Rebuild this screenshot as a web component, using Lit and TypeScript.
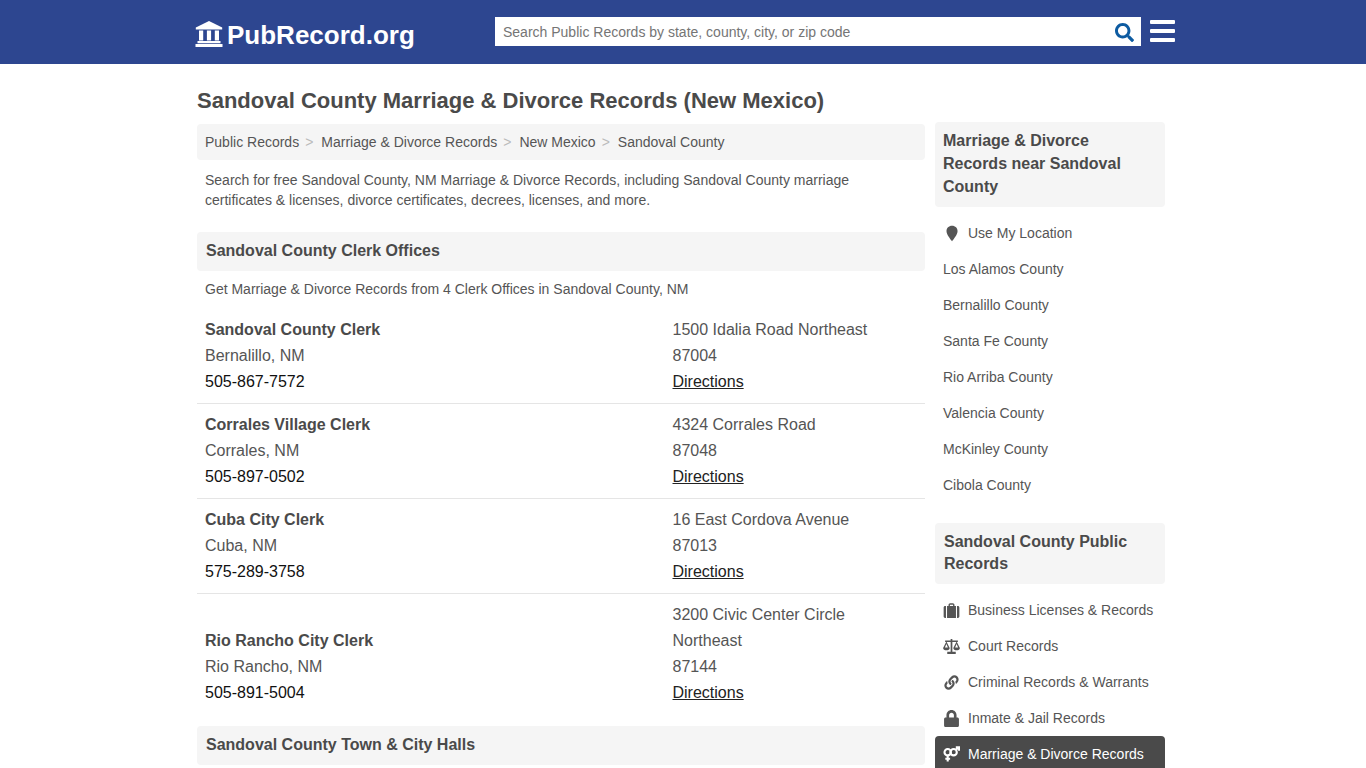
import { LitElement, html, css, svg } from "lit";
import { customElement } from "lit/decorators.js";

const offices = [
  { name: "Sandoval County Clerk", city: "Bernalillo, NM", phone: "505-867-7572", addr: ["1500 Idalia Road Northeast", "87004"] },
  { name: "Corrales Village Clerk", city: "Corrales, NM", phone: "505-897-0502", addr: ["4324 Corrales Road", "87048"] },
  { name: "Cuba City Clerk", city: "Cuba, NM", phone: "575-289-3758", addr: ["16 East Cordova Avenue", "87013"] },
  { name: "Rio Rancho City Clerk", city: "Rio Rancho, NM", phone: "505-891-5004", addr: ["3200 Civic Center Circle", "Northeast", "87144"] },
];
const near = ["Los Alamos County", "Bernalillo County", "Santa Fe County", "Rio Arriba County", "Valencia County", "McKinley County", "Cibola County"];

const icons: Record<string, [string, unknown]> = {
  pin: ["0 0 16 16", svg`<path d="M8.500 .8C5.400 .8 3.300 3 3.300 5.800 3.300 8.800 6.700 12.800 8.500 15.400c1.800-2.600 5.200-6.600 5.200-9.600C13.700 3 11.600 .8 8.500 .8z"/>`],
  brief: ["0 0 16 16", svg`<path fill-rule="evenodd" d="M.6 5.200C.6 4.400 1.200 3.800 2 3.800h.8V15H2c-.8 0-1.400-.6-1.400-1.400zM3.800 3.800h1.400V2.600C5.200 1.800 5.900 1.100 6.700 1.100h2.600c.8 0 1.500.7 1.500 1.500v1.200h1.400V15H3.800zM6.500 3.800h3V2.500h-3zM13.200 3.800h.8c.8 0 1.400.6 1.400 1.400v8.400c0 .8-.6 1.400-1.400 1.400h-.8z"/>`],
  scale: ["0 0 16 16", svg`<path d="M7.200 1H8.800V2.300H14V3.700H8.800V13H12V15H4V13H7.200V3.700H2V2.300H7.200z"/><path fill-rule="evenodd" d="M3.200 3.200 .1 9.400c0 1.500 1.400 2.200 3.100 2.200s3.100-.7 3.100-2.200zM3.200 5.600 1.800 9h2.800zM12.800 3.200 9.700 9.400c0 1.500 1.400 2.200 3.100 2.200s3.100-.7 3.100-2.200zM12.800 5.600 11.400 9h2.800z"/>`],
  link: ["-48 -48 608 608", svg`<path d="M326.612 185.391c59.747 59.809 58.927 155.698.36 214.59-.11.12-.24.25-.36.37l-67.2 67.2c-59.27 59.27-155.699 59.262-214.96 0-59.27-59.26-59.27-155.7 0-214.96l37.106-37.106c9.84-9.84 26.786-3.3 27.294 10.606.648 17.722 3.826 35.527 9.69 52.721 1.986 5.822.567 12.262-3.783 16.612l-13.087 13.087c-28.026 28.026-28.905 73.66-1.155 101.96 28.024 28.579 74.086 28.749 102.325.51l67.2-67.19c28.191-28.191 28.073-73.757 0-101.83-3.701-3.694-7.429-6.564-10.341-8.569a16.037 16.037 0 0 1-6.947-12.606c-.396-10.567 3.348-21.456 11.698-29.806l21.054-21.055c5.521-5.521 14.182-6.199 20.584-1.731a152.482 152.482 0 0 1 20.522 17.197zM467.547 44.449c-59.261-59.262-155.69-59.27-214.96 0l-67.2 67.2c-.12.12-.25.25-.36.37-58.566 58.892-59.387 154.781.36 214.59a152.454 152.454 0 0 0 20.521 17.196c6.402 4.468 15.064 3.789 20.584-1.731l21.054-21.055c8.35-8.35 12.094-19.239 11.698-29.806a16.037 16.037 0 0 0-6.947-12.606c-2.912-2.005-6.64-4.875-10.341-8.569-28.073-28.073-28.191-73.639 0-101.83l67.2-67.19c28.239-28.239 74.3-28.069 102.325.51 27.75 28.3 26.872 73.934-1.155 101.96l-13.087 13.087c-4.35 4.35-5.769 10.79-3.783 16.612 5.864 17.194 9.042 34.999 9.69 52.721.509 13.906 17.454 20.446 27.294 10.606l37.106-37.106c59.271-59.259 59.271-155.699.001-214.959z"/>`],
  lock: ["-32 0 512 512", svg`<path d="M400 224h-24v-72C376 68.200 307.800 0 224 0S72 68.200 72 152v72H48c-26.500 0-48 21.500-48 48v192c0 26.500 21.500 48 48 48h352c26.500 0 48-21.500 48-48V272c0-26.500-21.500-48-48-48zm-104 0H152v-72c0-39.700 32.300-72 72-72s72 32.300 72 72v72z"/>`],
  venus: ["0 0 17 16", svg`<g fill="none" stroke="currentColor" stroke-width="2.100"><circle cx="4.700" cy="5.700" r="3.200"/><circle cx="10.600" cy="5.700" r="3.200"/><path d="M4.700 8.900v6M2.300 12.300h4.800M13 3.300l2.500-2.300M12.800 .9h3.300v3.300"/></g>`],
};

function icon(name: string) {
  const [box, body] = icons[name];
  return html`<svg class="ico" viewBox=${box} fill="currentColor" aria-hidden="true">${body}</svg>`;
}

@customElement("app-root")
export class AppRoot extends LitElement {
  static styles = css`
    :host { display: block; height: 768px; overflow: hidden; background: #fff; color: #555; font-family: "Liberation Sans", Arial, sans-serif; font-size: 14px; }
    * { box-sizing: border-box; }
    a { color: inherit; text-decoration: none; }
    header { height: 64px; background: #2d4690; display: flex; justify-content: center; }
    .hbar { width: 980px; display: flex; align-items: center; position: relative; left: 2px; }
    .logo { display: flex; align-items: center; color: #fff; font-size: 26px; font-weight: 700; width: 300px; padding-top: 6px; gap: 4px; }
    .logo svg { width: 28px; height: 26px; fill: #fff; margin-top: -3px; flex: none; }
    .search { width: 646px; height: 29px; background: #fff; display: flex; align-items: center; justify-content: space-between; padding: 0 7px 0 8px; color: #757575; font-size: 14px; margin-top: -1px; }
    .search svg { width: 19px; height: 19px; fill: #0d5ba1; display: block; margin-top: 1px; }
    .bars { margin-left: 9px; width: 25px; height: 22px; display: flex; flex-direction: column; justify-content: space-between; margin-top: -3px; }
    .bars i { display: block; height: 4px; background: #fff; border-radius: 1px; }
    .wrap { width: 968px; margin: 0 auto; position: relative; left: -2px; }
    h1 { margin: 0; font-size: 22px; line-height: 30px; padding-top: 22px; font-weight: 700; height: 60px; color: #4a4a4a; }
    .cols { display: flex; gap: 10px; align-items: flex-start; }
    main { width: 728px; }
    aside { width: 230px; margin-top: -2px; }
    .crumbs { height: 36px; background: #f5f5f5; border-radius: 4px; display: flex; align-items: center; padding: 0 8px; }
    .crumbs s { text-decoration: none; color: #bbb; margin: 0 8px 0 6px; }
    .intro { margin: 10px 8px 22px; line-height: 20px; }
    h2 { margin: 0; background: #f5f5f5; border-radius: 4px; font-size: 16px; font-weight: 700; height: 39px; line-height: 37px; padding: 0 9px; color: #4a4a4a; }
    .lead { margin: 8px 8px 10px; line-height: 20px; }
    .row { display: flex; align-items: flex-end; padding: 8px; font-size: 16px; line-height: 26px; border-bottom: 1px solid #e5e5e5; }
    .row:last-of-type { border-bottom: 0; }
    .l { width: 467.5px; }
    .r { flex: 1; }
    .row b { display: block; color: #4a4a4a; }
    .row div div { white-space: nowrap; }
    .ph { color: #111; }
    .dir { color: #222; text-decoration: underline; }
    .next { margin-top: 12px; }
    .sh { background: #f5f5f5; border-radius: 4px; font-size: 16px; font-weight: 700; color: #4a4a4a; }
    .s1 { line-height: 23px; height: 85px; padding: 7px 8px; }
    .s2 { line-height: 22px; height: 61px; padding: 8px 9px; margin-top: 20px; }
    .list { padding-top: 8px; }
    .it { height: 36px; display: flex; align-items: center; padding: 0 8px; color: #555; }
    .it.act { background: #4a4a4a; color: #fff; border-radius: 4px; }
    .ico { width: 17px; height: 17px; margin-right: 8px; flex: none; }
    .list2 { padding-top: 8px; }
  `;

  render() {
    return html`
      <header>
        <div class="hbar">
          <a class="logo" href="#">
            <svg viewBox="0 0 28 26" aria-hidden="true"><path d="M14 0 .8 6.500V8.500h26.400V6.500z"/><path d="M4 9.500h4.200v10H4zM11.900 9.500h4.200v10h-4.200zM19.800 9.500H24v10h-4.200zM2.500 20h23v2.200h-23zM.5 23h27v3H.5z"/></svg>
            <span>PubRecord.org</span>
          </a>
          <div class="search">
            <span>Search Public Records by state, county, city, or zip code</span>
            <svg viewBox="0 0 512 512" aria-hidden="true"><path d="M505 442.7L405.3 343c-4.500-4.500-10.600-7-17-7H372c27.600-35.300 44-79.700 44-128C416 93.100 322.900 0 208 0S0 93.100 0 208s93.100 208 208 208c48.300 0 92.700-16.400 128-44v16.300c0 6.400 2.500 12.500 7 17l99.700 99.700c9.400 9.400 24.600 9.400 33.900 0l28.300-28.300c9.400-9.400 9.400-24.600.1-34zM208 336c-70.700 0-128-57.200-128-128 0-70.700 57.200-128 128-128 70.700 0 128 57.200 128 128 0 70.700-57.200 128-128 128z"/></svg>
          </div>
          <div class="bars"><i></i><i></i><i></i></div>
        </div>
      </header>
      <div class="wrap">
        <h1>Sandoval County Marriage &amp; Divorce Records (New Mexico)</h1>
        <div class="cols">
          <main>
            <nav class="crumbs">
              <a href="#">Public Records</a><s>&gt;</s>
              <a href="#">Marriage &amp; Divorce Records</a><s>&gt;</s>
              <a href="#">New Mexico</a><s>&gt;</s>
              <a href="#">Sandoval County</a>
            </nav>
            <p class="intro">Search for free Sandoval County, NM Marriage &amp; Divorce Records, including Sandoval County marriage certificates &amp; licenses, divorce certificates, decrees, licenses, and more.</p>
            <h2>Sandoval County Clerk Offices</h2>
            <p class="lead">Get Marriage &amp; Divorce Records from 4 Clerk Offices in Sandoval County, NM</p>
            ${offices.map(o => html`
              <div class="row">
                <div class="l"><b>${o.name}</b><div>${o.city}</div><div class="ph">${o.phone}</div></div>
                <div class="r">${o.addr.map(a => html`<div>${a}</div>`)}<div><a class="dir" href="#">Directions</a></div></div>
              </div>`)}
            <h2 class="next">Sandoval County Town &amp; City Halls</h2>
          </main>
          <aside>
            <div class="sh s1">Marriage &amp; Divorce Records near Sandoval County</div>
            <div class="list">
              <a class="it" href="#">${icon("pin")}Use My Location</a>
              ${near.map(n => html`<a class="it" href="#">${n}</a>`)}
            </div>
            <div class="sh s2">Sandoval County Public Records</div>
            <div class="list2">
              <a class="it" href="#">${icon("brief")}Business Licenses &amp; Records</a>
              <a class="it" href="#">${icon("scale")}Court Records</a>
              <a class="it" href="#">${icon("link")}Criminal Records &amp; Warrants</a>
              <a class="it" href="#">${icon("lock")}Inmate &amp; Jail Records</a>
              <a class="it act" href="#">${icon("venus")}Marriage &amp; Divorce Records</a>
            </div>
          </aside>
        </div>
      </div>
    `;
  }
}
